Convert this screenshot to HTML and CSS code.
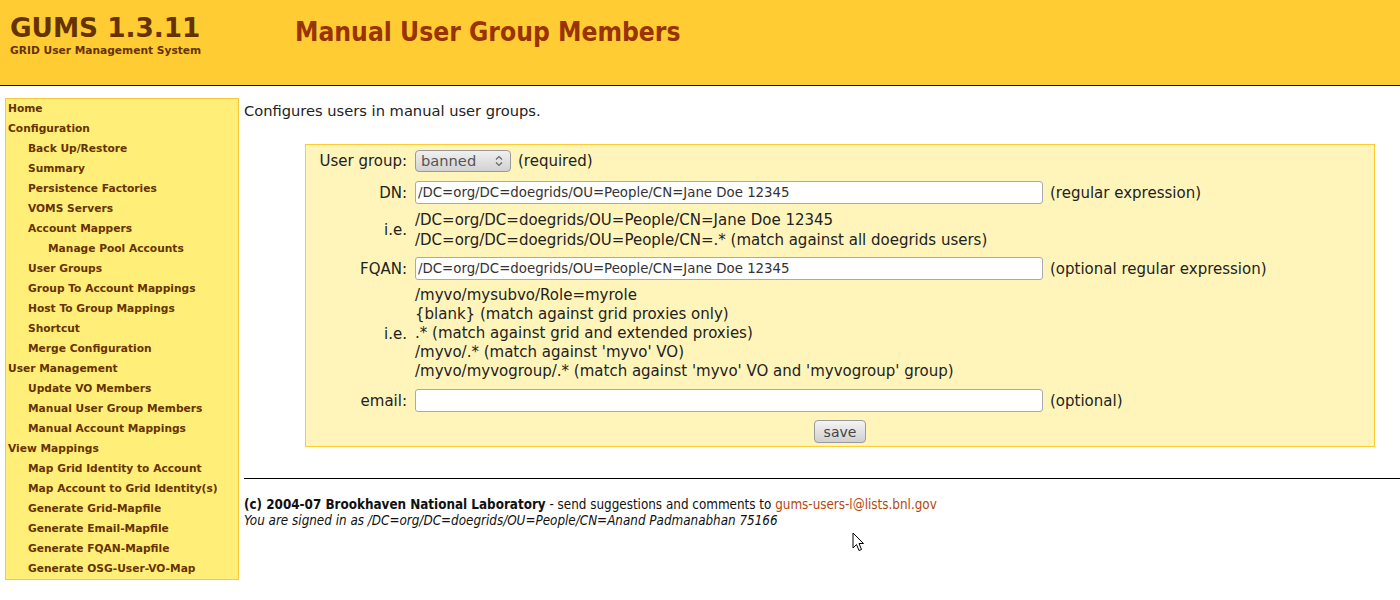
FILE: index.html
```html
<!DOCTYPE html>
<html lang="en">
<head>
<meta charset="utf-8">
<title>GUMS - Manual User Group Members</title>
<link rel="stylesheet" href="styles.css">
</head>
<body>
<div class="header">
  <div class="brand">
    <div class="brand-name">GUMS 1.3.11</div>
    <div class="brand-sub">GRID User Management System</div>
  </div>
  <h1 class="page-title">Manual User Group Members</h1>
</div>
<div class="main">
  <nav class="sidebar">
    <a class="l0">Home</a>
    <a class="l0">Configuration</a>
    <a class="l1">Back Up/Restore</a>
    <a class="l1">Summary</a>
    <a class="l1">Persistence Factories</a>
    <a class="l1">VOMS Servers</a>
    <a class="l1">Account Mappers</a>
    <a class="l2">Manage Pool Accounts</a>
    <a class="l1">User Groups</a>
    <a class="l1">Group To Account Mappings</a>
    <a class="l1">Host To Group Mappings</a>
    <a class="l1">Shortcut</a>
    <a class="l1">Merge Configuration</a>
    <a class="l0">User Management</a>
    <a class="l1">Update VO Members</a>
    <a class="l1">Manual User Group Members</a>
    <a class="l1">Manual Account Mappings</a>
    <a class="l0">View Mappings</a>
    <a class="l1">Map Grid Identity to Account</a>
    <a class="l1">Map Account to Grid Identity(s)</a>
    <a class="l1">Generate Grid-Mapfile</a>
    <a class="l1">Generate Email-Mapfile</a>
    <a class="l1">Generate FQAN-Mapfile</a>
    <a class="l1">Generate OSG-User-VO-Map</a>
  </nav>
  <div class="content">
    <p class="desc">Configures users in manual user groups.</p>
    <form class="form-box">
      <div class="frow r-group">
        <label class="flabel">User group:</label>
        <div class="fcell">
          <span class="select-wrap">
            <span class="select">banned</span>
            <svg class="select-arrows" width="8" height="12" viewBox="0 0 8 12"><path d="M1 4.5 L4 1.5 L7 4.5" fill="none" stroke="#666" stroke-width="1.2"/><path d="M1 7.5 L4 10.5 L7 7.5" fill="none" stroke="#666" stroke-width="1.2"/></svg>
          </span>
          <span class="note">(required)</span>
        </div>
      </div>
      <div class="frow r-dn">
        <label class="flabel">DN:</label>
        <input class="text-input" type="text" value="/DC=org/DC=doegrids/OU=People/CN=Jane Doe 12345">
        <span class="note">(regular expression)</span>
      </div>
      <div class="frow r-ie1">
        <span class="flabel">i.e.</span>
        <div class="examples ex-dn">
          <div>/DC=org/DC=doegrids/OU=People/CN=Jane Doe 12345</div>
          <div class="nowrap">/DC=org/DC=doegrids/OU=People/CN=.* (match against all doegrids users)</div>
        </div>
      </div>
      <div class="frow r-fqan">
        <label class="flabel">FQAN:</label>
        <input class="text-input" type="text" value="/DC=org/DC=doegrids/OU=People/CN=Jane Doe 12345">
        <span class="note">(optional regular expression)</span>
      </div>
      <div class="frow r-ie2">
        <span class="flabel">i.e.</span>
        <div class="examples ex-fqan">
          <div>/myvo/mysubvo/Role=myrole</div>
          <div>{blank} (match against grid proxies only)</div>
          <div>.* (match against grid and extended proxies)</div>
          <div>/myvo/.* (match against 'myvo' VO)</div>
          <div class="nowrap">/myvo/myvogroup/.* (match against 'myvo' VO and 'myvogroup' group)</div>
        </div>
      </div>
      <div class="frow r-email">
        <label class="flabel">email:</label>
        <input class="text-input" type="text" value="">
        <span class="note">(optional)</span>
      </div>
      <div class="r-save">
        <button type="button" class="save-btn">save</button>
      </div>
    </form>
    <hr class="rule">
    <div class="footer">
      <div><b>(c) 2004-07 Brookhaven National Laboratory</b> - send suggestions and comments to <a class="mail">gums-users-l@lists.bnl.gov</a></div>
      <div class="signed"><i>You are signed in as /DC=org/DC=doegrids/OU=People/CN=Anand Padmanabhan 75166</i></div>
    </div>
  </div>
</div>
<svg class="cursor" width="13" height="21" viewBox="0 0 13 21"><path d="M1 1 L1 16 L4.5 12.5 L7 18.5 L9.5 17.5 L7 11.5 L11.5 11.5 Z" fill="#fff" stroke="#000" stroke-width="1" stroke-linejoin="miter"/></svg>
</body>
</html>
```

FILE: styles.css
```css
html, body {
  margin: 0;
  padding: 0;
  background: #ffffff;
}

body {
  font-family: "DejaVu Sans", Verdana, sans-serif;
  color: #222;
  position: relative;
  min-height: 600px;
}

/* Header */
.header {
  height: 85px;
  background: #ffcc33;
  border-bottom: 1px solid #111;
  display: flex;
  align-items: flex-start;
}

.brand {
  width: 295px;
  padding-left: 10px;
  box-sizing: border-box;
  padding-top: 13px;
}

.brand-name {
  font-family: "DejaVu Sans", sans-serif;
  font-weight: bold;
  font-size: 26.3px;
  line-height: 30px;
  color: #663300;
}

.brand-sub {
  font-family: "DejaVu Sans", sans-serif;
  font-weight: bold;
  font-size: 10.67px;
  line-height: 13px;
  margin-top: 1px;
  color: #663300;
}

.page-title {
  margin: 0;
  padding-top: 16px;
  font-family: "DejaVu Sans Condensed", "DejaVu Sans", sans-serif;
  font-weight: bold;
  font-size: 26.2px;
  line-height: 32px;
  color: #993300;
}

/* Layout */
.main {
  display: flex;
  align-items: flex-start;
  margin-top: 12px;
  padding-left: 5px;
}

.sidebar {
  width: 234px;
  box-sizing: border-box;
  background: #ffee77;
  border: 1px solid #f8c83a;
  display: flex;
  flex-direction: column;
  flex: none;
}

.sidebar a {
  display: block;
  font-family: "DejaVu Sans", sans-serif;
  font-weight: bold;
  font-size: 10.67px;
  line-height: 20px;
  color: #663300;
  white-space: nowrap;
}

.sidebar .l0 { padding-left: 2px; }
.sidebar .l1 { padding-left: 22px; }
.sidebar .l2 { padding-left: 42px; }

.content {
  flex: 1;
  margin-left: 5px;
  padding-top: 4px;
}

.desc {
  margin: 0;
  font-size: 14.67px;
  line-height: 17px;
}

/* Form */
.form-box {
  margin: 25px 25px 0 61px;
  background: #fff5bb;
  border: 1px solid #ffcc33;
  padding: 0 10px 3px 10px;
  font-size: 15px;
}

.frow {
  display: grid;
  grid-template-columns: 92px 628px 1fr;
  column-gap: 7px;
  align-items: center;
}

.flabel {
  text-align: right;
  white-space: nowrap;
  padding-right: 1px;
}

.fcell {
  display: flex;
  align-items: center;
  gap: 7px;
  grid-column: 2 / 4;
}

.note {
  white-space: nowrap;
}

.r-group { margin-top: 5px; height: 22px; }
.r-dn { margin-top: 9px; }
.r-ie1 { margin-top: 6px; }
.r-fqan { margin-top: 7px; }
.r-ie2 { margin-top: 6px; }
.r-email { margin-top: 8px; }

.ex-dn { line-height: 20px; }
.ex-fqan { line-height: 19px; }

.examples {
  grid-column: 2 / 4;
}

.nowrap { white-space: nowrap; }

.select-wrap {
  position: relative;
  display: inline-block;
}

.select {
  display: block;
  width: 96px;
  height: 22px;
  box-sizing: border-box;
  border: 1px solid #9a9a9a;
  border-radius: 4px;
  background: linear-gradient(#f0f0f0, #d2d2d2);
  color: #555;
  padding-left: 5px;
  line-height: 20px;
  font-size: 14.67px;
}

.select-arrows {
  position: absolute;
  right: 8px;
  top: 5px;
}

.text-input {
  width: 628px;
  height: 23px;
  box-sizing: border-box;
  border: 1px solid #aaa;
  border-radius: 3px;
  background: #fff;
  font-family: "DejaVu Sans", sans-serif;
  font-size: 13.33px;
  color: #333;
  padding: 0 2px;
  margin: 0;
}

.r-save {
  margin-top: 8px;
  display: flex;
  justify-content: center;
}

.save-btn {
  width: 52px;
  height: 23px;
  box-sizing: border-box;
  border: 1px solid #9a9a9a;
  border-radius: 4px;
  background: linear-gradient(#f4f4f4, #d0d0d0);
  color: #444;
  font-family: "DejaVu Sans", sans-serif;
  font-size: 14px;
  padding: 0;
  line-height: 20px;
}

/* Footer */
.rule {
  margin: 31px 0 0 0;
  border: none;
  border-top: 1px solid #000;
  height: 0;
}

.footer {
  margin-top: 18px;
  font-family: "DejaVu Sans Condensed", "DejaVu Sans", sans-serif;
  font-size: 13.33px;
  line-height: 16px;
  color: #111;
}

.mail {
  color: #b5470d;
}

.cursor {
  position: absolute;
  left: 852px;
  top: 532px;
}
```
